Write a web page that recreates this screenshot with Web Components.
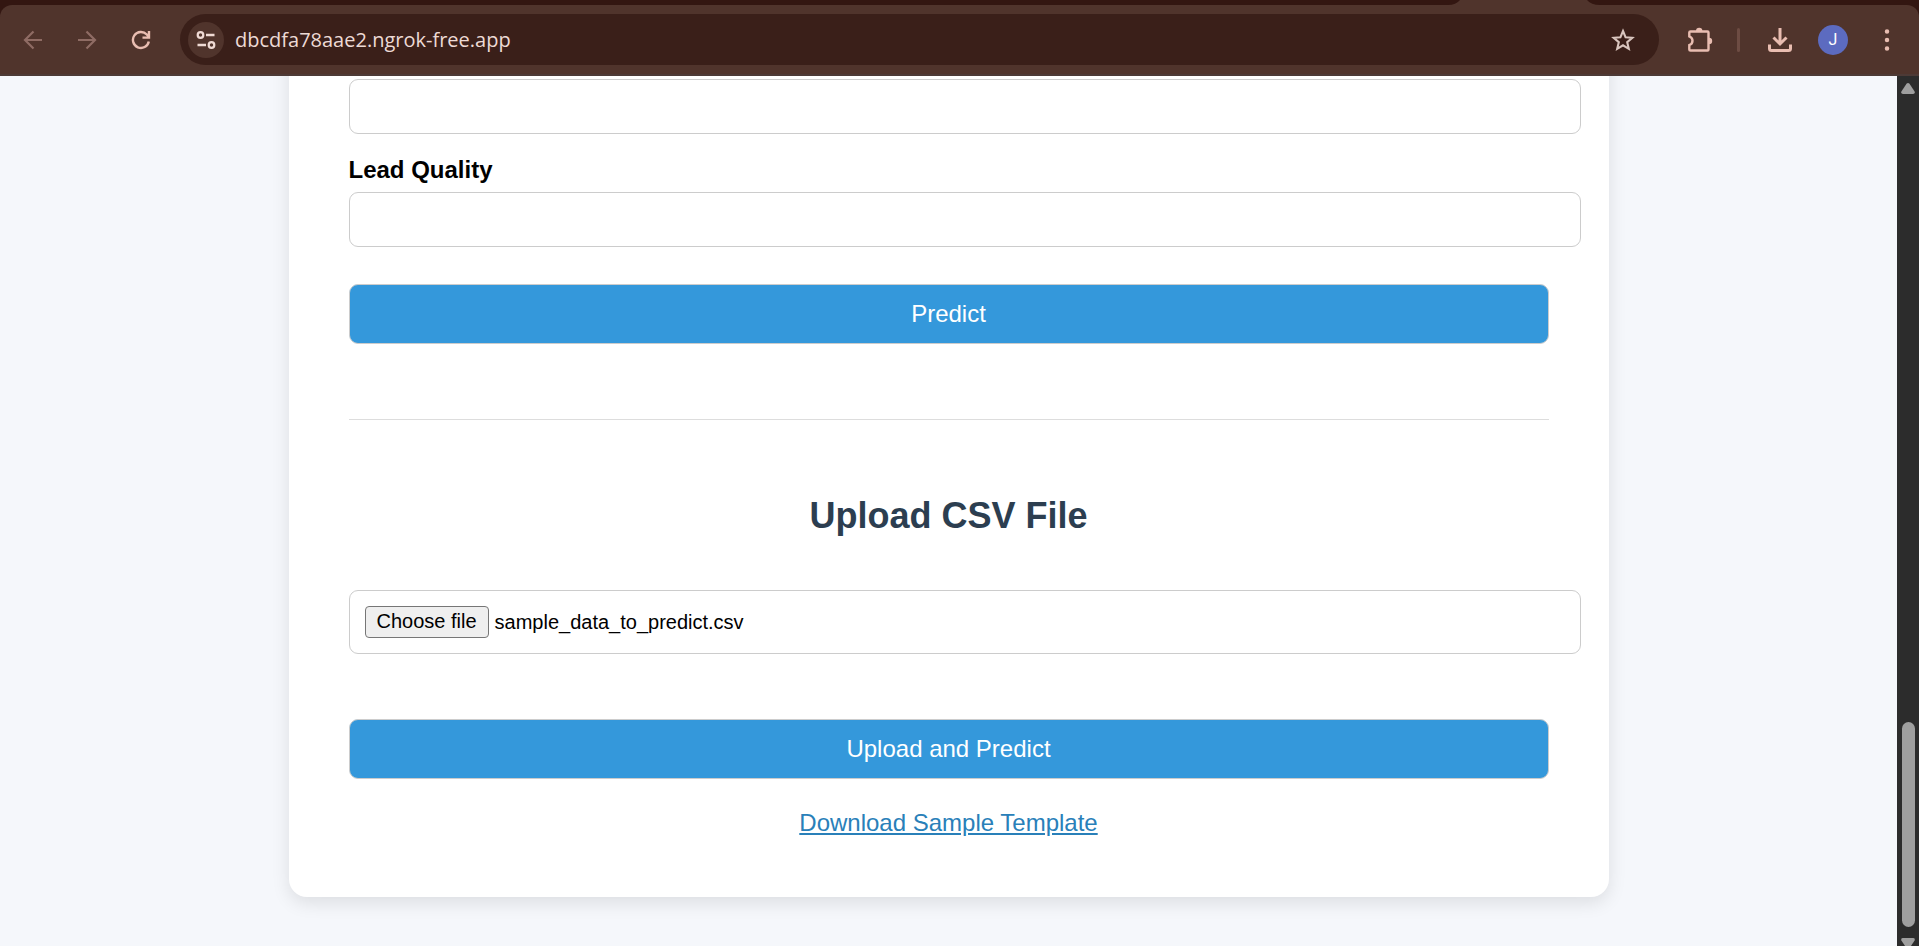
<!DOCTYPE html>
<html lang="en">
<head>
<meta charset="utf-8">
<title>Lead Prediction</title>
<style>
  html, body { margin: 0; height: 100%; }
  body { overflow: hidden; font-family: "Liberation Sans", Arial, sans-serif; font-size: 24px; color: #000; }
</style>
</head>
<body>
<browser-window>
  <browser-toolbar slot="toolbar" url="dbcdfa78aae2.ngrok-free.app" initial="J"></browser-toolbar>
  <form-card>
    <text-field name="lead-source"></text-field>
    <text-field name="lead-quality" label="Lead Quality"></text-field>
    <action-button class="predict">Predict</action-button>
    <section-divider></section-divider>
    <section-title>Upload CSV File</section-title>
    <file-field filename="sample_data_to_predict.csv"></file-field>
    <action-button class="upload">Upload and Predict</action-button>
    <download-link href="#template">Download Sample Template</download-link>
  </form-card>
  <scroll-bar slot="scrollbar"></scroll-bar>
</browser-window>

<script>
const define = (name, html, setup) => {
  const template = document.createElement('template');
  template.innerHTML = html;
  customElements.define(name, class extends HTMLElement {
    constructor() {
      super();
      this.attachShadow({ mode: 'open' }).append(template.content.cloneNode(true));
    }
    connectedCallback() { if (setup) setup(this, this.shadowRoot); }
  });
};

define('browser-window', `
  <style>
    :host { display: flex; flex-direction: column; height: 100vh; }
    .view { flex: 1; min-height: 0; display: flex; }
    main { flex: 1; min-width: 0; overflow: hidden; display: flow-root; background: #f5f7fb; }
  </style>
  <slot name="toolbar"></slot>
  <div class="view"><main><slot></slot></main><slot name="scrollbar"></slot></div>
`);

define('browser-toolbar', `
  <style>
    :host { display: block; background: #331611; }
    .tabs { height: 5px; display: flex; justify-content: flex-end; padding-right: 319px; }
    .tabs svg { width: 152px; height: 5px; }
    .bar { box-sizing: border-box; height: 71px; display: flex; align-items: center; background: #50342c;
      border-radius: 12px 12px 0 0; border-bottom: 2px solid #4d3a36; padding: 0 14px 0 15px; }
    button { appearance: none; border: 0; background: none; margin: 0; padding: 0; flex: none;
      width: 36px; height: 36px; display: grid; place-items: center; color: #e9bdb1; border-radius: 50%; }
    button:disabled { color: #8f6c64; }
    svg { display: block; fill: none; stroke: currentColor; stroke-width: 2.4; }
    nav { display: flex; gap: 18px; }
    .address { flex: 1; min-width: 0; box-sizing: border-box; height: 51px; margin-left: 21px; padding: 0 18px 0 8px;
      display: flex; align-items: center; border-radius: 26px; background: #3a1f19; }
    .address button { color: #d9c5be; }
    .address .site { background: #50342c; color: #efdad4; }
    input { flex: 1; min-width: 0; border: 0; outline: 0; background: none; margin: 0; padding: 0 0 0 11px;
      height: 30px; font: 20px/30px "Open Sans", "Noto Sans", sans-serif; color: #eddad5; }
    .tools { display: flex; align-items: center; margin-left: 23px; }
    .rule { width: 3px; height: 24px; border-radius: 2px; background: #6d4c43; margin: 0 22px 0 19px; }
    .avatar { width: 30px; height: 30px; margin: 0 21px 0 20px; background: #5c6bc0; color: #fff;
      font: 16px/30px Roboto, sans-serif; }
  </style>
  <div class="tabs"><svg viewBox="0 0 152 5" aria-hidden="true"><path d="M0 5Q8 5 12 0H139Q143 5 152 5Z" fill="#50342c" stroke="none"/></svg></div>
  <div class="bar">
    <nav>
      <button disabled aria-label="Back"><svg width="20" height="20" viewBox="0 0 20 20"><path d="M19 10H3M10.500 1.500L2 10L10.500 18.500" stroke-width="2.200"/></svg></button>
      <button disabled aria-label="Forward"><svg width="20" height="20" viewBox="0 0 20 20"><path d="M1 10H17M9.500 1.500L18 10L9.500 18.500" stroke-width="2.200"/></svg></button>
      <button aria-label="Reload"><svg width="20" height="20" viewBox="0 0 20 20"><path d="M17.800 11.500A8 8 0 1 1 15.800 4.500L18 7M18 1V7.600H11.500"/></svg></button>
    </nav>
    <div class="address">
      <button class="site" aria-label="Site information"><svg width="20" height="20" viewBox="0 0 20 20"><circle cx="4.500" cy="5" r="2.800" stroke-width="2.200"/><circle cx="15.500" cy="15" r="2.800" stroke-width="2.200"/><path d="M10 5H18.500M1.500 15H10"/></svg></button>
      <input type="text" aria-label="Address" spellcheck="false">
      <button aria-label="Bookmark"><svg width="24" height="24" viewBox="0 0 24 24"><path d="M12 3L14.600 9.300L21.300 9.800L16.200 14.200L17.800 20.800L12 17.300L6.200 20.800L7.800 14.200L2.700 9.800L9.400 9.300Z" stroke-width="2.100"/></svg></button>
    </div>
    <div class="tools">
      <button aria-label="Extensions"><svg width="26" height="26" viewBox="0 0 26 26"><path d="M3.500 4.500H20.500Q21.500 4.500 21.500 5.500V22.500Q21.500 23.500 20.500 23.500H3.500Q2.300 23.500 2.300 22.500V18.200Q5.500 17 5.500 13.800T2.300 9.400V5.500Q2.300 4.500 3.500 4.500Z"/><path d="M9 4A3.200 3.200 0 0 1 15.400 4ZM22 10.700A3.200 3.200 0 0 1 22 17.100Z" fill="currentColor" stroke="none"/></svg></button>
      <span class="rule"></span>
      <button aria-label="Downloads"><svg width="26" height="26" viewBox="0 0 26 26"><path d="M13 1V17M6.500 10.500L13 17L19.500 10.500M2.500 17.500V21.500Q2.500 23.500 4.500 23.500H21.500Q23.500 23.500 23.500 21.500V17.500" stroke-width="3"/></svg></button>
      <button class="avatar"></button>
      <button class="menu" aria-label="Menu"><svg width="6" height="24" viewBox="0 0 6 24"><path d="M3 3.500h0M3 12h0M3 20.500h0" stroke-width="4.500" stroke-linecap="round"/></svg></button>
    </div>
  </div>
`, (host, root) => {
  root.querySelector('input').value = host.getAttribute('url');
  root.querySelector('.avatar').textContent = host.getAttribute('initial');
});

define('scroll-bar', `
  <style>
    :host { flex: none; width: 22px; box-sizing: border-box; display: flex; flex-direction: column;
      align-items: center; overflow: hidden; background: #2c2c2c; padding-top: 7px; }
    svg { display: block; flex: none; fill: #9f9f9f; }
    .gap { flex: 628; }
    .thumb { flex: 205; width: 13px; border-radius: 7px; background: #9f9f9f; }
    .down { margin: 11px 0 -3px; }
  </style>
  <svg width="14" height="11" viewBox="0 0 14 11"><path d="M5.500 .800Q7 -.800 8.500 .800L13.600 8.500Q14.400 11 12 11H2Q-.400 11 .400 8.500Z"/></svg>
  <span class="gap"></span>
  <span class="thumb"></span>
  <svg class="down" width="14" height="11" viewBox="0 0 14 11"><path d="M5.500 10.200Q7 11.800 8.500 10.200L13.600 2.500Q14.400 0 12 0H2Q-.400 0 .400 2.500Z"/></svg>
`);

/* The card is scrolled: its head lies above the visible area. */
define('form-card', `
  <style>
    :host { display: block; box-sizing: border-box; max-width: 1320px; margin: -60px auto 49px; padding: 63px 60px 61px;
      background: #fff; border-radius: 18px; box-shadow: 0 6px 18px rgba(0,0,0,.1); }
    form { display: flex; flex-direction: column; }
    ::slotted(.predict) { margin-top: 37px; }
    ::slotted(.upload) { margin-top: 65px; }
  </style>
  <form><slot></slot></form>
`);

define('text-field', `
  <style>
    :host { display: block; }
    label { display: block; font-weight: bold; line-height: 27px; margin: 22px 0 9px; }
    label:empty { display: none; }
    input { display: block; box-sizing: content-box; width: 100%; height: 23px; margin: 0; padding: 15px;
      border: 1px solid #ccc; border-radius: 9px; background: #fff; font: 20px "Liberation Sans", Arial, sans-serif; }
  </style>
  <label for="field"></label><input id="field" type="text">
`, (host, root) => {
  root.querySelector('label').textContent = host.getAttribute('label') || '';
  root.querySelector('input').name = host.getAttribute('name');
});

define('action-button', `
  <style>
    :host { display: block; }
    button { display: block; box-sizing: border-box; width: 100%; height: 60px; margin: 0; padding: 0 15px 2px;
      border: 1px solid #ccc; border-radius: 9px; background: #3498db; color: #fff;
      font: 24px/27px "Liberation Sans", Arial, sans-serif; }
  </style>
  <button type="button"><slot></slot></button>
`);

define('section-divider', `
  <style>
    :host { display: block; }
    hr { height: 1px; margin: 75px 0; border: 0; background: #ddd; }
  </style>
  <hr>
`);

define('section-title', `
  <style>
    :host { display: block; }
    h2 { margin: 0 0 54px; text-align: center; color: #2c3e50; font-size: 36px; line-height: 41px; }
  </style>
  <h2><slot></slot></h2>
`);

define('file-field', `
  <style>
    :host { display: block; font-size: 20px; line-height: 23px; }
    .box { position: relative; box-sizing: content-box; width: 100%; height: 32px; padding: 15px;
      border: 1px solid #ccc; border-radius: 9px; display: flex; align-items: center; gap: 6px; }
    label { box-sizing: border-box; height: 32px; padding: 3px 11px; border: 1px solid #767676; border-radius: 4px; background: #efefef; }
    input { position: absolute; inset: 0; width: 100%; height: 100%; margin: 0; opacity: 0; }
  </style>
  <div class="box"><label for="file">Choose file</label><span></span><input id="file" type="file" accept=".csv"></div>
`, (host, root) => {
  const name = root.querySelector('span'), input = root.querySelector('input');
  name.textContent = host.getAttribute('filename');
  input.onchange = () => { if (input.files[0]) name.textContent = input.files[0].name; };
});

define('download-link', `
  <style>
    :host { display: block; margin-top: 30px; text-align: center; line-height: 27px; }
    a { color: #2980b9; text-decoration: underline; }
  </style>
  <a><slot></slot></a>
`, (host, root) => { root.querySelector('a').href = host.getAttribute('href'); });
</script>
</body>
</html>
